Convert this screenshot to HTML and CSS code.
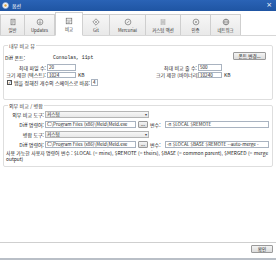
FILE: index.html
```html
<!DOCTYPE html>
<html lang="ko">
<head>
  <meta charset="UTF-8" />
  <title>옵션</title>
  <link rel="stylesheet" href="styles.css">
</head>
<body>
  <div class="window">
    <div class="titlebar">
      <svg class="app-icon" width="7" height="7" viewBox="0 0 8 8"><circle cx="4" cy="4" r="3.4" fill="#f3f6fb" stroke="#9bb3d6" stroke-width="0.8"/><circle cx="4" cy="4" r="1.4" fill="#e0a23a"/></svg>
      <span class="title">옵션</span>
      <span class="close">×</span>
    </div>

    <div class="tabs">
      <div class="tab t1">
        <svg viewBox="0 0 10 10"><rect x="2.5" y="1.5" width="5" height="7" fill="none" stroke="#666" stroke-width="0.8"/><path d="M3.5 3.5h3M3.5 5h3M3.5 6.5h2" stroke="#666" stroke-width="0.6"/></svg>
        <span>일반</span>
      </div>
      <div class="tab t2">
        <svg viewBox="0 0 10 10"><circle cx="5" cy="5" r="3.6" fill="none" stroke="#666" stroke-width="0.8"/><path d="M5 2.8v4M3.4 5.3L5 6.9l1.6-1.6" fill="none" stroke="#666" stroke-width="0.7"/></svg>
        <span>Updates</span>
      </div>
      <div class="tab t3 active">
        <svg viewBox="0 0 10 10"><rect x="1.5" y="1.5" width="7" height="7" fill="none" stroke="#666" stroke-width="0.8"/><path d="M1.5 4h7M3 6h4M3 7.3h3" stroke="#666" stroke-width="0.6"/></svg>
        <span>비교</span>
      </div>
      <div class="tab t4">
        <svg viewBox="0 0 10 10"><path d="M5 1L9 5 5 9 1 5z" fill="none" stroke="#666" stroke-width="0.8"/><circle cx="5" cy="5" r="1" fill="#666"/></svg>
        <span>Git</span>
      </div>
      <div class="tab t5">
        <svg viewBox="0 0 10 10"><circle cx="5" cy="5" r="3.6" fill="none" stroke="#666" stroke-width="0.8"/><path d="M3.4 6.6C4 4.8 6 5.6 6.4 3.6" fill="none" stroke="#666" stroke-width="0.7"/></svg>
        <span>Mercurial</span>
      </div>
      <div class="tab t6">
        <svg viewBox="0 0 10 10"><path d="M2 2.5h2M6 2.5h2M2 5h6M2 7.5h2M6 7.5h2" stroke="#666" stroke-width="0.8"/><path d="M5 1.5v2M5 6.5v2" stroke="#666" stroke-width="0.6"/></svg>
        <span>커스텀 액션</span>
      </div>
      <div class="tab t7">
        <svg viewBox="0 0 10 10"><circle cx="5" cy="5" r="3.6" fill="none" stroke="#666" stroke-width="0.8"/><path d="M3.6 3.6l2.8 2.8M6.4 3.6L3.6 6.4" stroke="#666" stroke-width="0.6"/></svg>
        <span>인증</span>
      </div>
      <div class="tab t8">
        <svg viewBox="0 0 10 10"><circle cx="5" cy="5" r="3.6" fill="none" stroke="#666" stroke-width="0.8"/><ellipse cx="5" cy="5" rx="1.6" ry="3.6" fill="none" stroke="#666" stroke-width="0.6"/><path d="M1.4 5h7.2" stroke="#666" stroke-width="0.6"/></svg>
        <span>네트워크</span>
      </div>
    </div>

    <div class="panel">
      <fieldset class="group g1">
        <legend>내부 비교 뷰</legend>
        <div class="row r-font">
          <span class="lbl">Diff 폰트:</span>
          <span class="mono">Consolas, 11pt</span>
          <span class="spacer"></span>
          <button class="btn font-btn">폰트 변경...</button>
        </div>
        <div class="row">
          <span class="half">
            <span class="lbl-r left-l">최대 파일 수:</span>
            <span class="field num">20</span>
          </span>
          <span class="lbl-r right-l">최대 비교 줄 수:</span>
          <span class="field num-r">500</span>
        </div>
        <div class="row">
          <span class="half">
            <span class="lbl-r left-l">크기 제한 (텍스트):</span>
            <span class="field num">1024</span>
            <span class="unit">KB</span>
          </span>
          <span class="lbl-r right-l">크기 제한 (바이너리):</span>
          <span class="field num-r">10240</span>
          <span class="unit">KB</span>
        </div>
        <div class="row">
          <span class="check">✓</span>
          <span>탭을 정해진 개수의 스페이스로 바꿈:</span>
          <span class="field tiny">4</span>
        </div>
      </fieldset>

      <fieldset class="group g2">
        <legend>외부 비교 / 병합</legend>
        <div class="row tall">
          <span class="lbl-r ext-l">외부 비교 도구:</span>
          <span class="field select">커스텀<i class="arrow">▾</i></span>
        </div>
        <div class="row tall">
          <span class="lbl-r ext-l">Diff 명령어:</span>
          <span class="field path">C:\Program Files (x86)\Meld\Meld.exe</span>
          <span class="btn dots">...</span>
          <span class="var">변수:</span>
          <span class="field args">-n $LOCAL $REMOTE</span>
        </div>
        <div class="row tall">
          <span class="lbl-r ext-l">병합 도구:</span>
          <span class="field select">커스텀<i class="arrow">▾</i></span>
        </div>
        <div class="row tall">
          <span class="lbl-r ext-l">Diff 명령어:</span>
          <span class="field path">C:\Program Files (x86)\Meld\Meld.exe</span>
          <span class="btn dots">...</span>
          <span class="var">변수:</span>
          <span class="field args">-n $LOCAL $BASE $REMOTE --auto-merge -</span>
        </div>
        <p class="help">사용 가능한 사용자 명령어 변수 : $LOCAL (= mine), $REMOTE (= theirs), $BASE (= common parent), $MERGED (= merge output)</p>
      </fieldset>
    </div>

    <div class="footer">
      <button class="btn ok">확인</button>
    </div>
  </div>
</body>
</html>
```

FILE: styles.css
```css
* {
  box-sizing: border-box;
}

body {
  margin: 0;
  background: #ffffff;
  font-family: "Noto Sans CJK KR", "Noto Sans", sans-serif;
  font-size: 5px;
  color: #222;
}

.window {
  width: 276px;
  height: 260px;
  display: flex;
  flex-direction: column;
  border-bottom: 2px solid #b9bfc7;
}

.titlebar {
  height: 11px;
  background: linear-gradient(#2a63b6, #1f55a3);
  color: #fff;
  display: flex;
  align-items: center;
  padding: 0 4px 0 2px;
  gap: 3px;
}

.title {
  font-size: 5px;
  flex: 1;
}

.close {
  font-family: "DejaVu Sans", sans-serif;
  font-size: 7px;
  line-height: 1;
}

.tabs {
  height: 25px;
  display: flex;
  align-items: flex-end;
  border-bottom: 1px solid #d7d7d7;
  background: #fff;
}

.tab {
  height: 21px;
  display: flex;
  flex-direction: column;
  align-items: center;
  justify-content: flex-start;
  padding-top: 3px;
  gap: 1px;
  background: linear-gradient(#f6f6f6, #e9e9e9);
  border: 1px solid #cfcfcf;
  border-left: none;
  border-bottom: none;
  font-size: 4.4px;
  color: #333;
  white-space: nowrap;
}

.tab svg {
  width: 8px;
  height: 8px;
}

.tab.active {
  height: 24px;
  background: #fff;
  border: 1px solid #d0d0d0;
  border-bottom: 1px solid #fff;
  margin-bottom: -1px;
  padding-top: 4px;
}

.t1 { width: 25px; border-left: 1px solid #cfcfcf; }
.t2 { width: 30px; }
.t3 { width: 28px; }
.t4 { width: 27px; }
.t5 { width: 36px; }
.t6 { width: 35px; }
.t7 { width: 30px; }
.t8 { width: 30px; }

.panel {
  flex: 1;
  padding: 6px 3px 0;
}

.group {
  margin: 0;
  border: 1px solid #dedede;
  border-radius: 2px;
  padding: 0 3px 0 1px;
}

.group legend {
  padding: 0 1px;
  margin-left: 3px;
  line-height: 7px;
  color: #333;
}

.g1 {
  padding-top: 4px;
  padding-bottom: 13px;
}

.g2 {
  margin-top: 2px;
  padding-top: 1px;
  padding-bottom: 4px;
}

.row {
  display: flex;
  align-items: center;
  height: 7.5px;
  white-space: nowrap;
}

.r-font {
  height: 9px;
  margin-bottom: 1.5px;
}

.row.tall {
  height: 8px;
  margin-bottom: 2px;
}

.half {
  display: flex;
  align-items: center;
  width: 151px;
}

.lbl {
  width: 48px;
}

.mono {
  font-family: "Liberation Mono", "DejaVu Sans Mono", monospace;
  font-size: 4.8px;
}

.spacer {
  flex: 1;
}

.lbl-r {
  text-align: right;
  padding-right: 1px;
}

.left-l { width: 42px; }
.right-l { width: 42px; }
.ext-l { width: 40px; }

.field {
  height: 6.5px;
  border: 1px solid #a9b3c0;
  background: #fff;
  display: flex;
  align-items: center;
  padding: 0 1px;
  font-size: 4.6px;
  overflow: hidden;
}

.num {
  width: 29px;
}

.num-r {
  width: 24px;
}

.unit {
  margin-left: 2px;
}

.tiny {
  width: 7px;
  margin-left: 1px;
}

.check {
  width: 5px;
  height: 5px;
  border: 1px solid #555;
  font-family: "DejaVu Sans", sans-serif;
  font-size: 4.5px;
  line-height: 3px;
  text-align: center;
  margin: 0 2px 0 2px;
}

.select {
  width: 104px;
  height: 7px;
  background: linear-gradient(#f7f7f7, #e8e8e8);
  border-color: #b5b5b5;
  justify-content: space-between;
}

.arrow {
  font-style: normal;
  font-family: "DejaVu Sans", sans-serif;
  font-size: 4px;
  color: #444;
}

.path {
  width: 91px;
  height: 7px;
}

.dots {
  width: 10px;
  height: 7px;
  margin-left: 2px;
  font-size: 4.5px;
  line-height: 5px;
  text-align: center;
}

.var {
  margin-left: 2px;
  width: 15px;
}

.args {
  width: 104px;
  height: 7px;
}

.btn {
  font-family: inherit;
  font-size: 4.6px;
  border: 1px solid #9a9a9a;
  background: linear-gradient(#f4f4f4, #dcdcdc);
  color: #222;
  padding: 0;
  border-radius: 1px;
}

.font-btn {
  width: 33px;
  height: 8px;
  margin-right: 3px;
  margin-top: -4px;
}

.help {
  margin: 1px 0 0 1px;
  line-height: 6px;
  font-size: 4.9px;
  white-space: normal;
}

.footer {
  height: 16px;
  border-top: 1px solid #cfcfcf;
  display: flex;
  justify-content: flex-end;
  align-items: flex-start;
  padding: 2px 3px 0;
}

.ok {
  width: 22px;
  height: 8px;
}
```
